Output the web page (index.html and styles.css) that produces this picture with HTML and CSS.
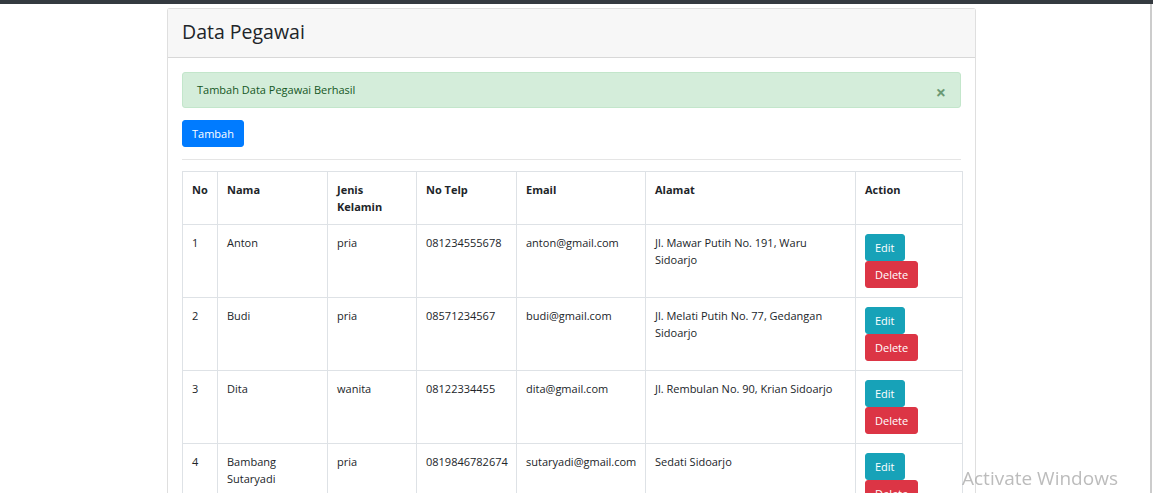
FILE: index.html
```html
<!DOCTYPE html>
<html>
<head>
<meta charset="utf-8">
<link rel="stylesheet" href="styles.css">
</head>
<body>
<div class="topbar"></div>
<div class="container">
  <div class="card">
    <div class="card-header"><h3 class="title">Data Pegawai</h3></div>
    <div class="card-body">
      <div class="alert">Tambah Data Pegawai Berhasil<span class="close">&times;</span></div>
      <button class="btn btn-primary">Tambah</button>
      <hr class="divider">
      <table class="table">
        <colgroup>
          <col class="c-no"><col class="c-nama"><col class="c-jk"><col class="c-telp"><col class="c-email"><col class="c-alamat"><col class="c-action">
        </colgroup>
        <thead>
          <tr><th>No</th><th>Nama</th><th>Jenis Kelamin</th><th>No Telp</th><th>Email</th><th>Alamat</th><th>Action</th></tr>
        </thead>
        <tbody>
          <tr><td>1</td><td>Anton</td><td>pria</td><td>081234555678</td><td>anton@gmail.com</td><td>Jl. Mawar Putih No. 191, Waru Sidoarjo</td><td><button class="btn btn-info">Edit</button><button class="btn btn-danger">Delete</button></td></tr>
          <tr><td>2</td><td>Budi</td><td>pria</td><td>08571234567</td><td>budi@gmail.com</td><td>Jl. Melati Putih No. 77, Gedangan Sidoarjo</td><td><button class="btn btn-info">Edit</button><button class="btn btn-danger">Delete</button></td></tr>
          <tr><td>3</td><td>Dita</td><td>wanita</td><td>08122334455</td><td>dita@gmail.com</td><td>Jl. Rembulan No. 90, Krian Sidoarjo</td><td><button class="btn btn-info">Edit</button><button class="btn btn-danger">Delete</button></td></tr>
          <tr><td>4</td><td>Bambang Sutaryadi</td><td>pria</td><td>0819846782674</td><td>sutaryadi@gmail.com</td><td>Sedati Sidoarjo</td><td><button class="btn btn-info">Edit</button><button class="btn btn-danger">Delete</button></td></tr>
        </tbody>
      </table>
    </div>
  </div>
</div>
<div class="watermark">Activate Windows</div>
<div class="scrollline"></div>
</body>
</html>
```
FILE: styles.css
```css
html, body {
  margin: 0;
  padding: 0;
  background: #fff;
  font-family: "Open Sans", "Noto Sans", sans-serif;
  font-size: 11px;
  line-height: 17px;
  color: #212529;
  overflow: hidden;
}
.topbar {
  height: 4px;
  background: #343a40;
}
.container {
  width: 809px;
  margin: 4px 0 0 167px;
}
.card {
  border: 1px solid rgba(0,0,0,.125);
  border-radius: 3px;
  background: #fff;
}
.card-header {
  background: #f7f7f7;
  border-bottom: 1px solid rgba(0,0,0,.125);
  padding: 8px 14px 9px;
  height: 31px;
}
.title {
  margin: 0;
  font-weight: 400;
  font-size: 19.5px;
  line-height: 30px;
}
.card-body {
  padding: 14px 14px;
}
.alert {
  position: relative;
  background: #d4edda;
  border: 1px solid #c3e6cb;
  color: #155724;
  border-radius: 3px;
  padding: 8px 14px 9px;
  margin-bottom: 12px;
}
.close {
  position: absolute;
  right: 14px;
  top: 7px;
  font-size: 18px;
  font-weight: 700;
  line-height: 24px;
  color: #155724;
  opacity: .55;
}
.btn {
  font-family: inherit;
  font-size: 11px;
  line-height: 17px;
  padding: 4px 9px;
  border: 1px solid transparent;
  border-radius: 3px;
  color: #fff;
  display: block;
  margin: 0;
}
.btn-primary { background: #007bff; border-color: #007bff; }
.btn-info { background: #17a2b8; border-color: #17a2b8; }
.btn-danger { background: #dc3545; border-color: #dc3545; }
.divider {
  border: 0;
  border-top: 1px solid rgba(0,0,0,.1);
  margin: 12px 0 11px;
}
.table {
  width: 780px;
  table-layout: fixed;
  border-collapse: collapse;
}
.table th, .table td {
  border: 1px solid #dee2e6;
  padding: 9px 9px;
  vertical-align: top;
  text-align: left;
}
.table th { font-weight: 700; }
.c-no { width: 35px; }
.c-nama { width: 110px; }
.c-jk { width: 89px; }
.c-telp { width: 100px; }
.c-email { width: 129px; }
.c-alamat { width: 210px; }
.c-action { width: 107px; }
.watermark {
  position: fixed;
  left: 962px;
  top: 466px;
  font-size: 19px;
  line-height: 24px;
  color: rgba(160,160,160,.7);
  font-family: "Open Sans", "Noto Sans", sans-serif;
}
.scrollline {
  position: fixed;
  right: 1px;
  top: 4px;
  bottom: 0;
  width: 2px;
  background: #ccc;
}
```
